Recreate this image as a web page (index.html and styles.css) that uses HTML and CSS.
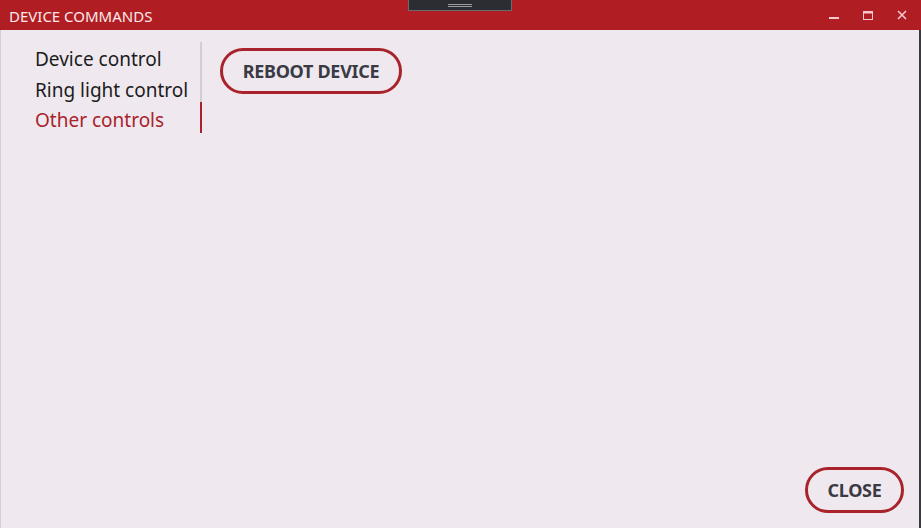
FILE: index.html
```html
<!DOCTYPE html>
<html>
<head>
<meta charset="utf-8">
<link rel="stylesheet" href="styles.css">
</head>
<body>
<div class="window">
  <div class="titlebar">
    <span class="title">DEVICE COMMANDS</span>
    <div class="handle"><span class="grip"></span></div>
    <div class="controls">
      <span class="ctl"><svg width="12" height="12" viewBox="0 0 12 12"><rect x="1" y="8" width="10" height="2" fill="#f6c9cc"/></svg></span>
      <span class="ctl"><svg width="12" height="12" viewBox="0 0 12 12"><rect x="1.5" y="2.5" width="9" height="8" fill="none" stroke="#f6c9cc" stroke-width="1"/><rect x="1.5" y="2.5" width="9" height="2" fill="#f6c9cc"/></svg></span>
      <span class="ctl"><svg width="12" height="12" viewBox="0 0 12 12"><path d="M2 2 L10 10 M10 2 L2 10" stroke="#f6c9cc" stroke-width="1.6"/></svg></span>
    </div>
  </div>
  <div class="content">
    <div class="body">
      <nav class="nav">
        <div class="item">Device control</div>
        <div class="item">Ring light control</div>
        <div class="item active">Other controls</div>
      </nav>
      <div class="main">
        <button class="pill">REBOOT DEVICE</button>
      </div>
    </div>
    <div class="footer">
      <button class="pill close">CLOSE</button>
    </div>
  </div>
</div>
</body>
</html>
```
FILE: styles.css
```css
html, body {
  margin: 0;
  padding: 0;
  width: 921px;
  height: 528px;
  overflow: hidden;
  background: #efe9ef;
  font-family: "Noto Sans", "Open Sans", sans-serif;
}
.window {
  display: flex;
  flex-direction: column;
  height: 528px;
}
.titlebar {
  position: relative;
  height: 30px;
  background: #b01e24;
  display: flex;
  align-items: center;
  flex-shrink: 0;
}
.title {
  color: #fbe9ea;
  font-size: 15px;
  padding-left: 9px;
  font-weight: 400;
  letter-spacing: 0;
  padding-top: 1px;
}
.handle {
  position: absolute;
  left: 408px;
  top: 0;
  width: 102px;
  height: 10px;
  background: #2b2d33;
  border: 1px solid #6b6c70;
  border-top: none;
  display: flex;
  justify-content: center;
  align-items: center;
}
.grip {
  width: 24px;
  height: 1px;
  border-top: 1px solid #9a9ba0;
  border-bottom: 1px solid #9a9ba0;
  margin-top: 1px;
}
.controls {
  margin-left: auto;
  display: flex;
  gap: 22px;
  padding-right: 13px;
}
.ctl {
  width: 12px;
  height: 12px;
  display: flex;
}
.content {
  flex: 1;
  display: flex;
  flex-direction: column;
  border-left: 1px solid #d5cfd5;
  border-right: 2px solid #3a3a3e;
}
.body {
  flex: 1;
  display: flex;
  padding-top: 12px;
}
.nav {
  box-sizing: border-box;
  width: 201px;
  padding-left: 34px;
  padding-top: 2px;
  border-right: 2px solid #d3ced3;
  height: 91px;
  position: relative;
  display: flex;
  flex-direction: column;
}
.nav .item {
  font-size: 19px;
  line-height: 30.5px;
  color: #1c1c1c;
  white-space: nowrap;
}
.nav .item.active {
  color: #a8232b;
}
.nav::after {
  content: "";
  position: absolute;
  right: -2px;
  bottom: 0;
  width: 2px;
  height: 31px;
  background: #a8232b;
}
.main {
  padding-left: 18px;
  padding-top: 6px;
}
.pill {
  font-family: "Noto Sans", "Open Sans", sans-serif;
  font-weight: 700;
  font-size: 18px;
  color: #3a3a44;
  background: transparent;
  border: 3px solid #a8232b;
  border-radius: 24px;
  height: 46px;
  padding: 0;
  cursor: pointer;
  letter-spacing: -0.3px;
}
.main .pill {
  width: 182px;
}
.footer {
  display: flex;
  justify-content: flex-end;
  padding: 0 15px 15px 0;
}
.pill.close {
  width: 99px;
}
```
